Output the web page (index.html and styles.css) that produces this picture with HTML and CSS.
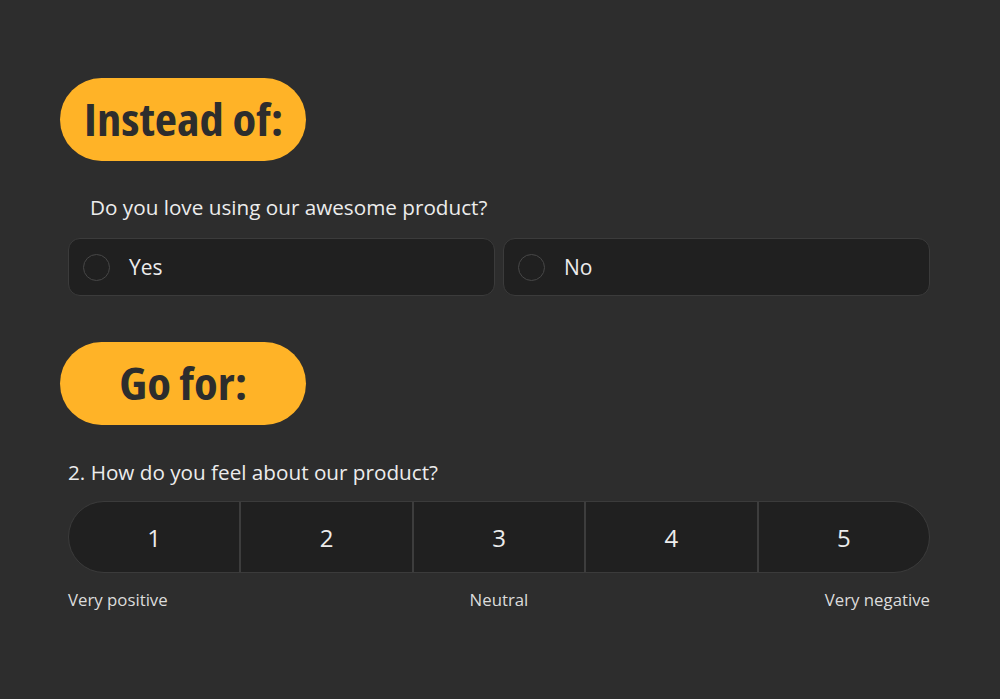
FILE: index.html
```html
<!DOCTYPE html>
<html>
<head>
<meta charset="utf-8">
<link rel="stylesheet" href="styles.css">
</head>
<body>
<main class="page">
  <div class="pill pill-left"><span class="pill-text">Instead of:</span></div>
  <p class="q1">Do you love using our awesome product?</p>
  <div class="options">
    <label class="option"><span class="radio"></span><span class="opt-text">Yes</span></label>
    <label class="option"><span class="radio"></span><span class="opt-text">No</span></label>
  </div>
  <div class="pill pill-center"><span class="pill-text">Go for:</span></div>
  <p class="q2">2. How do you feel about our product?</p>
  <div class="scale">
    <div class="cell">1</div>
    <div class="cell">2</div>
    <div class="cell">3</div>
    <div class="cell">4</div>
    <div class="cell">5</div>
  </div>
  <div class="labels">
    <span class="lab-left">Very positive</span>
    <span class="lab-mid">Neutral</span>
    <span class="lab-right">Very negative</span>
  </div>
</main>
</body>
</html>
```
FILE: styles.css
```css
html, body {
  margin: 0;
  padding: 0;
  background: #2d2d2d;
  font-family: "Open Sans", "Noto Sans", sans-serif;
  color: #ececec;
}
.page {
  width: 862px;
  padding: 78px 70px 0 68px;
  display: flex;
  flex-direction: column;
}
.pill {
  width: 246px;
  height: 83px;
  margin-left: -8px;
  border-radius: 42px;
  background: #ffb327;
  display: flex;
  align-items: center;
  color: #2d2d2d;
}
.pill-left { justify-content: flex-start; padding-left: 24px; box-sizing: border-box; }
.pill-center { justify-content: center; }
.pill-text {
  font-size: 45px;
  font-weight: 700;
  font-stretch: 75%;
  line-height: 1;
  display: inline-block;
  margin-top: -3px;
  transform: scaleX(1.08);
}
.pill-left .pill-text { transform-origin: left center; }
.pill-center .pill-text { transform-origin: center center; }
.q1 {
  margin: 33px 0 0 22px;
  font-size: 20.7px;
  line-height: 26px;
}
.options {
  margin-top: 18px;
  display: flex;
  gap: 8px;
}
.option {
  flex: 1;
  height: 58px;
  box-sizing: border-box;
  background: #202020;
  border: 1px solid #3b3b3b;
  border-radius: 12px;
  display: flex;
  align-items: center;
  padding-left: 14px;
}
.radio {
  width: 27px;
  height: 27px;
  box-sizing: border-box;
  border: 1.5px solid #474747;
  border-radius: 50%;
}
.opt-text {
  margin-left: 19px;
  font-size: 21px;
}
.pill-center { margin-top: 46px; }
.q2 {
  margin: 34px 0 0 0;
  font-size: 20.7px;
  line-height: 26px;
}
.scale {
  margin-top: 16px;
  height: 72px;
  display: flex;
  box-sizing: border-box;
  border: 1px solid #3b3b3b;
  border-radius: 36px;
  background: #202020;
  overflow: hidden;
}
.cell {
  flex: 1;
  display: flex;
  align-items: center;
  justify-content: center;
  font-size: 24px;
  border-left: 2px solid #3d3d3d;
}
.cell:first-child { border-left: none; }
.labels {
  margin-top: 16px;
  display: grid;
  grid-template-columns: 1fr auto 1fr;
  font-size: 16.8px;
  line-height: 22px;
  color: #dcdcdc;
}
.lab-left { justify-self: start; }
.lab-mid { justify-self: center; }
.lab-right { justify-self: end; }
```
